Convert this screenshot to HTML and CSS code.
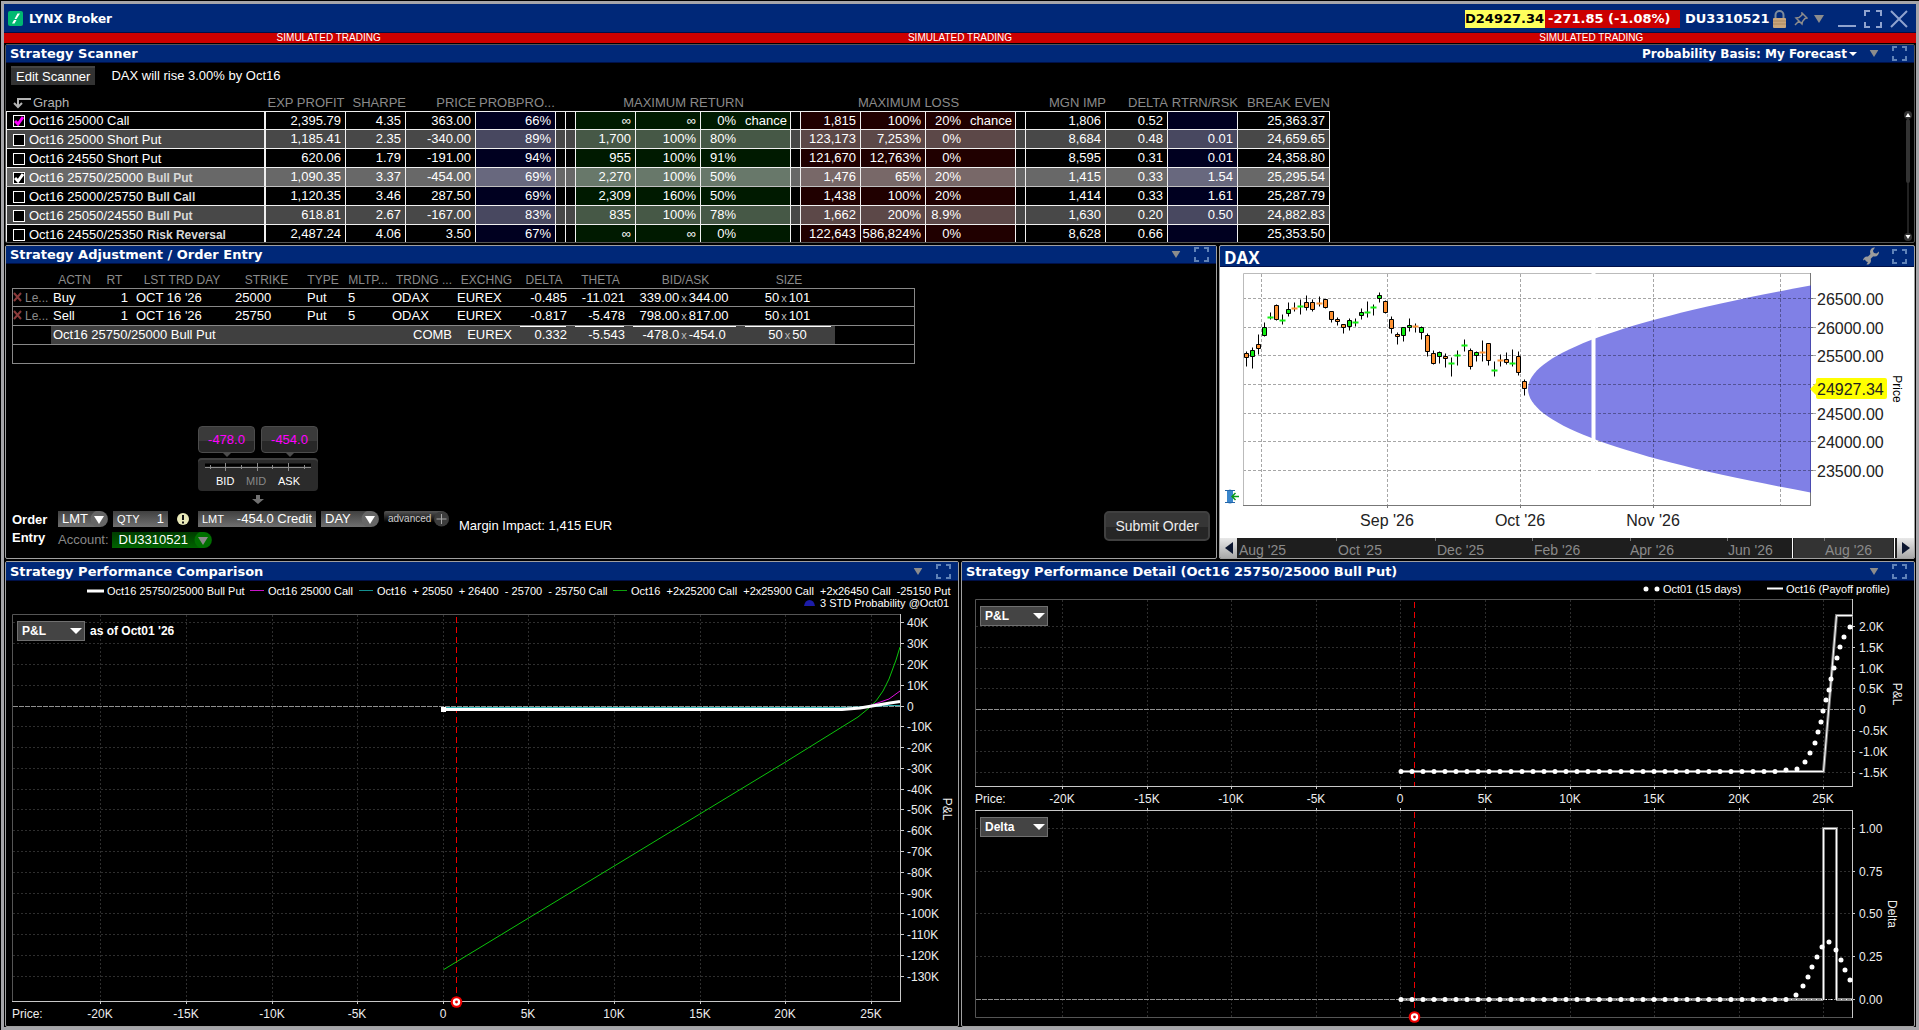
FILE: index.html
```html
<!DOCTYPE html>
<html lang="en">
<head>
<meta charset="utf-8">
<title>LYNX Broker</title>
<link rel="stylesheet" href="styles.css">
</head>
<body>
<svg class="defs" aria-hidden="true">
  <symbol id="expand" viewBox="0 0 15 15"><path d="M1 5V1h4M10 1h4v4M14 10v4h-4M5 14H1v-4" fill="none" stroke="#5f82b8" stroke-width="2"/></symbol>
  <symbol id="tri" viewBox="0 0 10 8"><path d="M0 0h10L5 8z" fill="#8c8c8c"/></symbol>
  <symbol id="target" viewBox="0 0 14 14"><circle cx="7" cy="7" r="6.3" fill="#f00000"/><circle cx="7" cy="7" r="4" fill="#fff"/><circle cx="7" cy="7" r="1.5" fill="#e00000"/></symbol>
</svg>
<div class="window">
  <header class="titlebar">
    <svg class="logo" viewBox="0 0 15 15"><rect width="15" height="15" rx="2" fill="#00b871"/><path d="M4 12.500h2.500L8.500 9H6zM8.500 8L12 2.500H9.500L6.500 8z" fill="#fff"/></svg>
    <h1>LYNX Broker</h1>
    <span class="index-last">D24927.34</span>
    <span class="index-change">-271.85 (-1.08%)</span>
    <span class="account-id">DU3310521</span>
    <svg class="lock" viewBox="0 0 13 18"><path d="M2.500 9V5a4 4 0 0 1 8 0v4" fill="none" stroke="#7d8b9c" stroke-width="2"/><rect y="8" width="13" height="10" rx="1" fill="#c9a67c"/><path d="M0 11h13M0 14h13" stroke="#ab8860"/></svg>
    <svg class="pin" viewBox="0 0 14 14"><path d="M8 1l5 5-2 .5-2.500 3L8 12 2 6l3-.5L8 3zM5 9l-4 4" fill="none" stroke="#8c8c8c" stroke-width="1.500"/></svg>
    <svg class="tri-menu" viewBox="0 0 10 8"><use href="#tri"/></svg>
    <button class="win-button" aria-label="Minimize"><svg width="18" height="18"><path d="M0 16h18" stroke="#8fa3cf" stroke-width="2"/></svg></button>
    <button class="win-button" aria-label="Maximize"><svg width="18" height="18"><path d="M1 6V1h5M12 1h5v5M17 12v5h-5M6 17H1v-5" fill="none" stroke="#8fa3cf" stroke-width="2"/></svg></button>
    <button class="win-button" aria-label="Close"><svg width="18" height="18"><path d="M1 1l16 16M17 1L1 17" stroke="#8fa3cf" stroke-width="2"/></svg></button>
  </header>
  <div class="sim-bar"><span>SIMULATED TRADING</span><span>SIMULATED TRADING</span><span>SIMULATED TRADING</span></div>

  <main class="workspace">
    <section class="panel scanner">
      <div class="panel-title"><h2>Strategy Scanner</h2>
        <button class="basis">Probability Basis: My Forecast<svg width="8" height="5"><path d="M0 0h8L4 4z" fill="#fff"/></svg></button>
        <svg class="tri" viewBox="0 0 10 8"><use href="#tri"/></svg><svg class="expand"><use href="#expand"/></svg></div>
      <div class="scanner-tools"><button class="edit-scanner">Edit Scanner</button><span>DAX will rise 3.00% by Oct16</span></div>
      <div class="scanner-body">
      <table class="scan">
        <colgroup><col class="w260"><col class="w80"><col class="w60"><col class="w70"><col class="w80"><col class="w10"><col class="w10"><col class="w60"><col class="w65"><col class="w90"><col class="w10"><col class="w60"><col class="w65"><col class="w90"><col class="w10"><col class="w80"><col class="w62"><col class="w70"><col class="w92"></colgroup>
        <thead><tr><th class="graph"><svg width="18" height="12"><path d="M18 2H5v8M1 6l4 4 4-4" fill="none" stroke="#b4b4b4" stroke-width="2"/></svg>Graph</th><th class="mid">EXP PROFIT</th><th>SHARPE</th><th>PRICE</th><th class="cut">PROBPRO...</th><th></th><th></th><th colspan="3" class="mid">MAXIMUM RETURN</th><th></th><th colspan="3" class="mid">MAXIMUM LOSS</th><th></th><th>MGN IMP</th><th>DELTA</th><th>RTRN/RSK</th><th>BREAK EVEN</th></tr></thead>
        <tbody>
        <tr><td><label><input type="checkbox" class="pink" checked>Oct16 25000 Call</label></td><td>2,395.79</td><td>4.35</td><td>363.00</td><td class="b">66%</td><td></td><td></td><td class="g">∞</td><td class="g">∞</td><td class="g c"><span>0%</span>chance</td><td></td><td class="r">1,815</td><td class="r">100%</td><td class="r c"><span>20%</span>chance</td><td></td><td>1,806</td><td>0.52</td><td class="b"></td><td>25,363.37</td></tr>
        <tr class="alt"><td><label><input type="checkbox">Oct16 25000 Short Put</label></td><td>1,185.41</td><td>2.35</td><td>-340.00</td><td class="b">89%</td><td></td><td></td><td class="g">1,700</td><td class="g">100%</td><td class="g c"><span>80%</span></td><td></td><td class="r">123,173</td><td class="r">7,253%</td><td class="r c"><span>0%</span></td><td></td><td>8,684</td><td>0.48</td><td class="b">0.01</td><td>24,659.65</td></tr>
        <tr><td><label><input type="checkbox">Oct16 24550 Short Put</label></td><td>620.06</td><td>1.79</td><td>-191.00</td><td class="b">94%</td><td></td><td></td><td class="g">955</td><td class="g">100%</td><td class="g c"><span>91%</span></td><td></td><td class="r">121,670</td><td class="r">12,763%</td><td class="r c"><span>0%</span></td><td></td><td>8,595</td><td>0.31</td><td class="b">0.01</td><td>24,358.80</td></tr>
        <tr class="sel"><td><label><input type="checkbox" checked>Oct16 25750/25000 <b>Bull Put</b></label></td><td>1,090.35</td><td>3.37</td><td>-454.00</td><td class="b">69%</td><td></td><td></td><td class="g">2,270</td><td class="g">100%</td><td class="g c"><span>50%</span></td><td></td><td class="r">1,476</td><td class="r">65%</td><td class="r c"><span>20%</span></td><td></td><td>1,415</td><td>0.33</td><td class="b">1.54</td><td>25,295.54</td></tr>
        <tr><td><label><input type="checkbox">Oct16 25000/25750 <b>Bull Call</b></label></td><td>1,120.35</td><td>3.46</td><td>287.50</td><td class="b">69%</td><td></td><td></td><td class="g">2,309</td><td class="g">160%</td><td class="g c"><span>50%</span></td><td></td><td class="r">1,438</td><td class="r">100%</td><td class="r c"><span>20%</span></td><td></td><td>1,414</td><td>0.33</td><td class="b">1.61</td><td>25,287.79</td></tr>
        <tr class="alt"><td><label><input type="checkbox">Oct16 25050/24550 <b>Bull Put</b></label></td><td>618.81</td><td>2.67</td><td>-167.00</td><td class="b">83%</td><td></td><td></td><td class="g">835</td><td class="g">100%</td><td class="g c"><span>78%</span></td><td></td><td class="r">1,662</td><td class="r">200%</td><td class="r c"><span>8.9%</span></td><td></td><td>1,630</td><td>0.20</td><td class="b">0.50</td><td>24,882.83</td></tr>
        <tr><td><label><input type="checkbox">Oct16 24550/25350 <b>Risk Reversal</b></label></td><td>2,487.24</td><td>4.06</td><td>3.50</td><td class="b">67%</td><td></td><td></td><td class="g">∞</td><td class="g">∞</td><td class="g c"><span>0%</span></td><td></td><td class="r">122,643</td><td class="r">586,824%</td><td class="r c"><span>0%</span></td><td></td><td>8,628</td><td>0.66</td><td class="b"></td><td>25,353.50</td></tr>
        </tbody>
      </table>
      <svg class="scrollbar" viewBox="0 0 8 132"><path d="M4 9v114" stroke="#222" stroke-width="2"/><path d="M4 11v60" stroke="#333" stroke-width="4" stroke-linecap="round"/><circle cx="4" cy="5" r="4" fill="#333"/><circle cx="4" cy="127" r="4" fill="#333"/><path d="M1.500 7h5L4 3zM1.500 125h5L4 129z" fill="#fff"/></svg>
      </div>
    </section>

    <div class="row trade">
      <section class="panel order">
        <div class="panel-title"><h2>Strategy Adjustment / Order Entry</h2><svg class="tri" viewBox="0 0 10 8"><use href="#tri"/></svg><svg class="expand"><use href="#expand"/></svg></div>
        <div class="order-body">
        <table class="legs">
          <colgroup><col class="w39"><col class="w44"><col class="w36"><col class="w99"><col class="w70"><col class="w43"><col class="w47"><col class="w65"><col class="w60"><col class="w55"><col class="w58"><col class="w112"><col class="w95"><col class="w80"></colgroup>
          <thead><tr><th></th><th>ACTN</th><th>RT</th><th>LST TRD DAY</th><th>STRIKE</th><th>TYPE</th><th>MLTP...</th><th>TRDNG ...</th><th>EXCHNG</th><th>DELTA</th><th>THETA</th><th>BID/ASK</th><th>SIZE</th><th></th></tr></thead>
          <tbody>
          <tr><td class="leg"><svg width="9" height="10"><path d="M1 1l7 8M8 1L1 9" stroke="#8a3a3a" stroke-width="2"/></svg>Le...</td><td>Buy</td><td class="n">1</td><td class="i">OCT 16 '26</td><td class="i">25000</td><td class="j">Put</td><td class="i">5</td><td>ODAX</td><td>EUREX</td><td class="n">-0.485</td><td class="n">-11.021</td><td class="m">339.00<i>x</i>344.00</td><td class="m">50<i>x</i>101</td><td></td></tr>
          <tr><td class="leg"><svg width="9" height="10"><path d="M1 1l7 8M8 1L1 9" stroke="#8a3a3a" stroke-width="2"/></svg>Le...</td><td>Sell</td><td class="n">1</td><td class="i">OCT 16 '26</td><td class="i">25750</td><td class="j">Put</td><td class="i">5</td><td>ODAX</td><td>EUREX</td><td class="n">-0.817</td><td class="n">-5.478</td><td class="m">798.00<i>x</i>817.00</td><td class="m">50<i>x</i>101</td><td></td></tr>
          <tr class="combo"><td class="off"></td><td colspan="6">Oct16 25750/25000 Bull Put</td><td class="n">COMB</td><td class="n">EUREX</td><td class="n sum">0.332</td><td class="n sum">-5.543</td><td class="m sum">-478.0<i>x</i>-454.0</td><td class="m sum">50<i>x</i>50</td><td class="off"></td></tr>
          <tr><td colspan="14"></td></tr>
          </tbody>
        </table>
        <div class="quote">
          <div class="quote-prices"><button class="price-tag">-478.0</button><button class="price-tag">-454.0</button></div>
          <div class="price-slider">
            <svg width="108" height="10"><path d="M1 3h106" stroke="#000" stroke-width="3"/><path d="M1 5.500h106M6.500 3v4M21.500 1v8M37.500 3v4M53.500 1v8M68.500 3v4M84.500 1v8M100.500 3v4" stroke="#8c8c8c"/></svg>
            <div class="slider-labels"><span>BID</span><span class="dim">MID</span><span>ASK</span></div>
          </div>
          <svg class="down" width="12" height="10"><path d="M4 0h4v4h4L6 9 0 4h4z" fill="#707070"/></svg>
        </div>
        <div class="ticket">
          <div class="ticket-name">Order<br>Entry</div>
          <div class="ticket-fields">
            <div class="fields">
              <select class="pick type" aria-label="Order type"><option>LMT</option></select>
              <label class="field qty">QTY<input value="1"></label>
              <svg class="alert" width="12" height="14"><ellipse cx="6" cy="7" rx="6" ry="6" fill="#e8e8b8"/><path d="M6 3v5M6 9.500v2" stroke="#111" stroke-width="2"/></svg>
              <label class="field limit">LMT<input value="-454.0 Credit"></label>
              <select class="pick tif" aria-label="Time in force"><option>DAY</option></select>
              <button class="advanced">advanced<svg width="15" height="16"><circle cx="7.500" cy="8" r="7.500" fill="#3c3c3c"/><path d="M7.500 3v10M2.500 8h10" stroke="#a8a8a8"/></svg></button>
            </div>
            <div class="fields account"><label for="acct">Account:</label><select id="acct" class="pick acct"><option>DU3310521</option></select></div>
          </div>
          <div class="margin-impact">Margin Impact: 1,415 EUR</div>
          <button class="submit">Submit Order</button>
        </div>
        </div>
      </section>

      <section class="panel dax">
        <div class="panel-title"><h2>DAX</h2>
          <svg class="wrench" viewBox="0 0 18 18"><path d="M4 14L12 6" stroke="#9c9c9c" stroke-width="3.500"/><path d="M17 4.500a4.500 4.500 0 1 1-4-4L11 3.500l.5 2.500 3 .5zM1 13.500a4 4 0 1 1 3.500 4L6 15l-1-2-2-.5z" fill="#9c9c9c"/></svg>
          <svg class="expand"><use href="#expand"/></svg></div>
        <svg class="chart price-chart" viewBox="1220 267 694 271">
          <path d="M1528 389C1528 354.500 1622.200 320 1810.500 285.600V492.400C1622.200 458 1528 423.500 1528 389z" fill="#8080e6"/>
          <path class="grid-light" d="M1243 298.500h573M1243 327.500h573M1243 355.500h573M1243 384.500h573M1243 413.500h573M1243 441.500h573M1243 470.500h573M1261.500 274v232M1387.500 274v232M1520.500 274v232M1653.500 274v232M1780.500 274v232"/>
          <path d="M1243.500 506V273.500H1811" fill="none" stroke="#bbb"/>
          <path d="M1593.500 272v233" stroke="#fff" stroke-width="4"/>
          <path d="M1243 505.500h568M1810.500 273v233M1387.500 505v3M1520.500 505v3M1653.500 505v3M1810 298.500h3M1810 327.500h3M1810 355.500h3M1810 413.500h3M1810 441.500h3M1810 470.500h3" fill="none" stroke="#777"/>
          <path d="M1810.500 285.500v207" stroke="#4a4ab0"/>
          <g transform="translate(.5 .5)">
            <path stroke="#000" d="M1246 351v15M1252 347v21M1258 334v20M1264 322v14M1270 312v7M1276 304v16M1282 314v10M1288 302v14M1294 302v9M1300 299v15M1306 295v15M1312 299v12M1319 296v10M1325 299v9M1331 311v11M1337 317v8M1343 324v9M1349 318v12M1355 318v8M1361 308v11M1367 301v16M1373 304v11M1379 292v10M1385 300v13M1391 316v17M1397 332v12M1403 327v14M1409 318v13M1415 323v9M1421 326v13M1427 333v23M1433 350v14M1439 351v12M1445 353v14M1451 357v19M1457 350v15M1464 339v12M1470 348v21M1476 351v10M1482 340v21M1488 343v22M1494 361v15M1500 354v12M1506 352v12M1512 349v17M1518 351v24M1524 379v16"/>
            <path fill="#ff9232" stroke="#000" d="M1244 353h4v4h-4zM1256 344h4v4h-4zM1274 305h4v14h-4zM1304 302h4v5h-4zM1310 302h4v7h-4zM1323 299h4v8h-4zM1329 311h4v8h-4zM1335 319h4v2h-4zM1341 324h4v3h-4zM1383 301h4v11h-4zM1389 319h4v9h-4zM1395 334h4v2h-4zM1425 335h4v16h-4zM1431 353h4v10h-4zM1443 356h4v2h-4zM1468 350h4v16h-4zM1486 343h4v17h-4zM1504 359h4v3h-4zM1516 356h4v16h-4zM1522 381h4v7h-4z"/>
            <path fill="#12ee12" stroke="#000" d="M1250 350h4v6h-4zM1262 327h4v8h-4zM1286 309h4v4h-4zM1347 320h4v6h-4zM1359 312h4v3h-4zM1377 295h4v3h-4zM1401 327h4v8h-4zM1407 325h4v2h-4zM1419 327h4v5h-4zM1437 352h4v4h-4zM1474 352h4v3h-4z"/>
            <path stroke="#ff9232" stroke-width="2" d="M1291 308h6M1316 303h6M1412 326h6M1479 352h6M1497 360h6"/>
            <path stroke="#12ee12" stroke-width="2" d="M1267 317h6M1279 320h6M1297 306h6M1352 322h6M1364 312h6M1370 307h6M1448 363h6M1454 355h6M1461 345h6M1491 370h6M1509 363h6"/>
          </g>
          <path d="M1810 389l6-6v-3q0-2 2-2h67q2 0 2 2v17q0 2-2 2h-67q-2 0-2-2v-2z" fill="#ff0"/>
          <g class="price-text"><text x="1817" y="305">26500.00</text><text x="1817" y="334">26000.00</text><text x="1817" y="362">25500.00</text><text x="1817" y="395">24927.34</text><text x="1817" y="420">24500.00</text><text x="1817" y="448">24000.00</text><text x="1817" y="477">23500.00</text></g>
          <g class="price-text mid-text"><text x="1387" y="526">Sep '26</text><text x="1520" y="526">Oct '26</text><text x="1653" y="526">Nov '26</text></g>
          <text class="side dark" transform="translate(1893 389) rotate(90)">Price</text>
          <path d="M1227 491q3-3 6 0v11q-3 3-6 0z" fill="#3a86cc"/><path d="M1225 490.500h10M1225 502.500h10" stroke="#2566a8"/><path d="M1232 496.500h7M1235.500 493l-3.500 3.500 3.500 3.500" fill="none" stroke="#0a9a1a" stroke-width="1.500"/>
        </svg>
        <div class="timeline">
          <button aria-label="Earlier"><svg width="8" height="12"><path d="M8 0v12L0 6z" fill="#0c1630"/></svg></button>
          <svg class="track" viewBox="1237 538 660 20"><rect x="1237" y="538" width="660" height="20" fill="#1e1e1e"/><rect x="1794" y="538" width="99" height="20" fill="#333"/><path d="M1792.500 538v20M1894.500 538v20" stroke="#fff"/><path d="M1336.500 538v3M1435.500 538v3M1532.500 538v3M1630.500 538v3M1727.500 538v3M1824.500 538v3" stroke="#777"/>
            <g><text x="1239" y="555">Aug '25</text><text x="1338" y="555">Oct '25</text><text x="1437" y="555">Dec '25</text><text x="1534" y="555">Feb '26</text><text x="1630" y="555">Apr '26</text><text x="1728" y="555">Jun '26</text><text x="1825" y="555">Aug '26</text></g></svg>
          <button aria-label="Later"><svg width="8" height="12"><path d="M0 0v12l8-6z" fill="#0c1630"/></svg></button>
        </div>
      </section>
    </div>

    <div class="row perf">
      <section class="panel chart-panel">
        <div class="panel-title"><h2>Strategy Performance Comparison</h2><svg class="tri" viewBox="0 0 10 8"><use href="#tri"/></svg><svg class="expand"><use href="#expand"/></svg></div>
        <div class="chart-body">
        <svg class="chart" viewBox="6 581 952 445">
          <path class="grid" d="M13 622.500h888M13 643.500h888M13 664.500h888M13 685.500h888M13 726.500h888M13 747.500h888M13 768.500h888M13 789.500h888M13 809.500h888M13 830.500h888M13 851.500h888M13 872.500h888M13 893.500h888M13 913.500h888M13 934.500h888M13 955.500h888M13 976.500h888M100.500 615v386M186.500 615v386M272.500 615v386M357.500 615v386M443.500 615v386M528.500 615v386M614.500 615v386M700.500 615v386M785.500 615v386M871.500 615v386"/>
          <path d="M12.500 1001V614.500H901" fill="none" stroke="#555"/>
          <path class="axis" d="M12 1001.500h889M900.500 614v387M100.500 1001v3M186.500 1001v3M272.500 1001v3M357.500 1001v3M443.500 1001v3M528.500 1001v3M614.500 1001v3M700.500 1001v3M785.500 1001v3M871.500 1001v3M901 622.500h3M901 643.500h3M901 664.500h3M901 685.500h3M901 706.500h3M901 726.500h3M901 747.500h3M901 768.500h3M901 789.500h3M901 809.500h3M901 830.500h3M901 851.500h3M901 872.500h3M901 893.500h3M901 913.500h3M901 934.500h3M901 955.500h3M901 976.500h3"/>
          <path class="zero" d="M13 706.500h888"/>
          <path class="cursor" d="M456.500 617v376"/>
          <path d="M443.500 969.700L785.500 762 858 717l11-9q8-7 14-17l6-12 7-19 4-13" fill="none" stroke="#0cc40c"/>
          <path d="M869 706l20-7 11-8" fill="none" stroke="#e010e0"/>
          <path d="M443 707.500h400l30-1 16-1h11" fill="none" stroke="#2ab0b0"/>
          <path d="M443 709.500H842l18-1.500 12-2 18-3 10-1.500" fill="none" stroke="#fff" stroke-width="3"/><rect x="441" y="707" width="5" height="5" fill="#fff"/>
          <use href="#target" x="450" y="995" width="13" height="14"/>
          <g class="legend"><path d="M87 591h17" stroke="#fff" stroke-width="3"/><path d="M250 590.500h14" stroke="#c814c8"/><path d="M359 590.500h14" stroke="#149090"/><path d="M613 590.500h14" stroke="#0ca00c"/>
            <text x="107" y="595">Oct16 25750/25000 Bull Put</text><text x="268" y="595">Oct16 25000 Call</text><text x="377" y="595">Oct16  + 25050  + 26400  - 25700  - 25750 Call</text><text x="631" y="595">Oct16  +2x25200 Call  +2x25900 Call  +2x26450 Call  -25150 Put</text><text x="820" y="607">3 STD Probability @Oct01</text><path d="M804 606q1-6 5.500-6t5.500 6z" fill="#1c1ca8"/></g>
          <g class="labels"><text x="907" y="627">40K</text><text x="907" y="648">30K</text><text x="907" y="669">20K</text><text x="907" y="690">10K</text><text x="907" y="711">0</text><text x="907" y="731">-10K</text><text x="907" y="752">-20K</text><text x="907" y="773">-30K</text><text x="907" y="794">-40K</text><text x="907" y="814">-50K</text><text x="907" y="835">-60K</text><text x="907" y="856">-70K</text><text x="907" y="877">-80K</text><text x="907" y="898">-90K</text><text x="907" y="918">-100K</text><text x="907" y="939">-110K</text><text x="907" y="960">-120K</text><text x="907" y="981">-130K</text><text x="12" y="1018">Price:</text></g>
          <g class="labels mid-text"><text x="100" y="1018">-20K</text><text x="186" y="1018">-15K</text><text x="272" y="1018">-10K</text><text x="357" y="1018">-5K</text><text x="443" y="1018">0</text><text x="528" y="1018">5K</text><text x="614" y="1018">10K</text><text x="700" y="1018">15K</text><text x="785" y="1018">20K</text><text x="871" y="1018">25K</text></g>
          <text class="side" transform="translate(943 809) rotate(90)">P&amp;L</text>
        </svg>
        <div class="overlay compare"><select aria-label="Measure"><option>P&amp;L</option></select><span>as of Oct01 '26</span></div>
        </div>
      </section>

      <section class="panel chart-panel">
        <div class="panel-title"><h2>Strategy Performance Detail (Oct16 25750/25000 Bull Put)</h2><svg class="tri" viewBox="0 0 10 8"><use href="#tri"/></svg><svg class="expand"><use href="#expand"/></svg></div>
        <div class="chart-body">
        <svg class="chart" viewBox="962 581 952 445">
          <path class="grid" d="M976 626.500h877M976 647.500h877M976 668.500h877M976 688.500h877M976 730.500h877M976 751.500h877M976 772.500h877M976 828.500h877M976 871.500h877M976 913.500h877M976 956.500h877M1062.500 600v186M1147.500 600v186M1231.500 600v186M1316.500 600v186M1400.500 600v186M1485.500 600v186M1570.500 600v186M1654.500 600v186M1739.500 600v186M1823.500 600v186M1062.500 811v206M1147.500 811v206M1231.500 811v206M1316.500 811v206M1400.500 811v206M1485.500 811v206M1570.500 811v206M1654.500 811v206M1739.500 811v206M1823.500 811v206"/>
          <path d="M975.500 786V599.500H1853M975.500 811v206.500H1853" fill="none" stroke="#555"/>
          <path class="axis" d="M975 786.500h878M1852.500 599v187M975 810.500h878M1852.500 810v208M1062.500 786v3M1147.500 786v3M1231.500 786v3M1316.500 786v3M1400.500 786v3M1485.500 786v3M1570.500 786v3M1654.500 786v3M1739.500 786v3M1823.500 786v3M1062.500 808v3M1147.500 808v3M1231.500 808v3M1316.500 808v3M1400.500 808v3M1485.500 808v3M1570.500 808v3M1654.500 808v3M1739.500 808v3M1823.500 808v3M1853 626.500h2M1853 647.500h2M1853 668.500h2M1853 688.500h2M1853 709.500h2M1853 730.500h2M1853 751.500h2M1853 772.500h2M1853 828.500h2M1853 871.500h2M1853 913.500h2M1853 956.500h2M1853 999.500h2"/>
          <path class="zero" d="M976 709.500h877M976 999.500h877"/>
          <path class="cursor" d="M1414.500 602v184M1414.500 812v198"/>
          <path d="M1401 999.500h422M1836 999.500h16" stroke="#888" stroke-width="3"/><path d="M1401 999.500h452" stroke="#fff" stroke-dasharray="1 4"/>
          <path d="M1400 771.500h423.500l13-156h16M1823.500 1000V828.500h13V1000" fill="none" stroke="#808080" stroke-width="3"/>
          <path d="M1400 771.500h423.500l13-156h16M1823.500 1000V828.500h13V1000" fill="none" stroke="#fff"/>
          <g class="dots"><path stroke-dasharray="0 11" d="M1401 771.500h376M1401 999.500h387"/>
            <path d="M1786 770h0M1797 769h0M1805 762h0M1810 753h0M1815 743h0M1818 732h0M1821 722h0M1823 711h0M1826 700h0M1829 690h0M1831 679h0M1834 668h0M1837 658h0M1840 647h0M1844 637h0M1850 627h0M1796 995h0M1803 986h0M1808 977h0M1812 967h0M1817 957h0M1822 947h0M1829 942h0M1836 950h0M1841 960h0M1845 970h0M1850 980h0M1646 589h0M1657 589h0"/></g>
          <use href="#target" x="1408" y="1010" width="13" height="14"/>
          <g class="legend"><path d="M1767 588.500h16" stroke="#fff" stroke-width="2"/><text x="1663" y="593">Oct01 (15 days)</text><text x="1786" y="593">Oct16 (Payoff profile)</text></g>
          <g class="labels"><text x="1859" y="631">2.0K</text><text x="1859" y="652">1.5K</text><text x="1859" y="673">1.0K</text><text x="1859" y="693">0.5K</text><text x="1859" y="714">0</text><text x="1859" y="735">-0.5K</text><text x="1859" y="756">-1.0K</text><text x="1859" y="777">-1.5K</text><text x="1859" y="833">1.00</text><text x="1859" y="876">0.75</text><text x="1859" y="918">0.50</text><text x="1859" y="961">0.25</text><text x="1859" y="1004">0.00</text><text x="975" y="803">Price:</text></g>
          <g class="labels mid-text"><text x="1062" y="803">-20K</text><text x="1147" y="803">-15K</text><text x="1231" y="803">-10K</text><text x="1316" y="803">-5K</text><text x="1400" y="803">0</text><text x="1485" y="803">5K</text><text x="1570" y="803">10K</text><text x="1654" y="803">15K</text><text x="1739" y="803">20K</text><text x="1823" y="803">25K</text></g>
          <text class="side" transform="translate(1893 694) rotate(90)">P&amp;L</text><text class="side" transform="translate(1888 914) rotate(90)">Delta</text>
        </svg>
        <div class="overlay detail-top"><select aria-label="Upper measure"><option>P&amp;L</option></select></div>
        <div class="overlay detail-low"><select aria-label="Lower measure"><option>Delta</option></select></div>
        </div>
      </section>
    </div>
  </main>
</div>
</body>
</html>
```
FILE: styles.css
```css
* { box-sizing: border-box; }
body { margin: 0; background: #000; color: #fff; font: 13px/18px "Liberation Sans", Arial, sans-serif; }
button, input, select { font: inherit; color: inherit; border: 0; padding: 0; margin: 0; background: none; border-radius: 0; appearance: none; }
h1, h2 { margin: 0; font: bold 13px/18px "DejaVu Sans", Verdana, sans-serif; white-space: nowrap; }
svg { display: block; flex: none; }
.defs { position: absolute; width: 0; height: 0; }

.window { display: flex; flex-direction: column; height: calc(100vh - 1px); min-height: 900px; margin: 1px 0 0 1px; border: 3px solid #a6a6aa; background: #000; }
.titlebar { display: flex; align-items: center; height: 29px; padding: 1px 8px 0 4px; background: #002878; border-bottom: 1px solid #001048; font: bold 13px/18px "DejaVu Sans", Verdana, sans-serif; white-space: nowrap; }
.logo { width: 15px; height: 15px; margin-right: 6px; }
.titlebar h1 { flex: 1; font-size: 12px; }
.index-last { width: 80px; background: #ffff5c; color: #000; }
.index-change { width: 135px; padding-left: 3px; background: #cc0000; }
.account-id { width: 93px; padding-left: 5px; }
.lock { width: 13px; height: 18px; margin-right: 8px; }
.pin { width: 14px; height: 14px; margin-right: 6px; }
.tri-menu { width: 10px; height: 8px; margin-right: 14px; }
.win-button { width: 18px; height: 18px; margin-left: 8px; }
.tri-menu + .win-button { margin-left: 0; }
.sim-bar { display: grid; grid-template-columns: repeat(3, 1fr); padding: 0 9px; height: 10px; margin-bottom: 1px; background: #cc0000; font-size: 10px; line-height: 10px; text-align: center; }

.workspace { flex: 1; min-height: 0; display: grid; grid-template-rows: minmax(0, 199fr) minmax(0, 314fr) minmax(0, 466fr); gap: 2px; margin: 0 1px; }
.row { display: grid; gap: 2px; min-height: 0; }
.trade { grid-template-columns: minmax(0, 1212fr) minmax(0, 696fr); }
.perf { grid-template-columns: minmax(0, 1fr) minmax(0, 1fr); }
.panel { display: flex; flex-direction: column; min-width: 0; min-height: 0; overflow: hidden; border: 1px solid #a0a0a0; border-radius: 2px; background: #000; }
.scanner { border-color: #555; }
.panel-title { flex: none; display: flex; align-items: center; height: 18px; padding: 0 7px 0 4px; background: #002878; border-bottom: 1px solid #001048; }
.panel-title h2 { flex: 1; padding-top: 1px; }
.tri { width: 10px; height: 7px; margin-right: 13px; }
.expand { width: 15px; height: 15px; }
.basis { display: flex; align-items: center; gap: 2px; margin-right: 12px; padding-top: 1px; font: bold 12px/17px "DejaVu Sans", Verdana, sans-serif; }
.chart-panel .panel-title { height: 19px; }
.dax .panel-title { height: 21px; }
.panel.dax h2 { padding-top: 2px; font: bold 17px/19px "Open Sans", sans-serif; }
.wrench { width: 18px; height: 18px; margin-right: 12px; }

.scanner-tools { display: flex; align-items: center; gap: 16px; padding: 3px 5px 0; }
.edit-scanner { height: 19px; padding: 0 5px; background: #333; border-top: 2px solid #444; line-height: 17px; }
.scanner-body { display: flex; justify-content: space-between; padding-right: 1px; }
table { table-layout: fixed; border-collapse: separate; border-spacing: 0; }
td, th { padding: 0; white-space: nowrap; overflow: hidden; }
th { font-weight: normal; color: #8a8a8a; }
.scan { width: 1324px; }
.scan th { height: 26px; padding-top: 8px; line-height: 18px; text-align: right; }
.scan thead th { padding-top: 9px; line-height: 17px; }
.scan th.mid { text-align: center; }
.scan th.cut { text-align: left; padding-left: 3px; }
.scan th.graph { display: flex; align-items: center; padding-left: 7px; gap: 2px; color: #b4b4b4; }
.scan td { height: 19px; padding-right: 4px; line-height: 16px; text-align: right; border-right: 1px solid #f0f0f0; border-bottom: 1px solid #f0f0f0; }
.scan tr:first-child td { border-top: 1px solid #f0f0f0; }
.scan td:first-child { text-align: left; border-left: 1px solid #f0f0f0; border-right-width: 2px; }
.scan td:nth-child(6), .scan td:nth-child(7), .scan td:nth-child(11), .scan td:nth-child(15) { padding: 0; }
.scan label { display: flex; align-items: center; gap: 4px; padding: 1px 0 0 6px; line-height: 16px; }
.scan label b { font-size: 12px; color: #d8d8d8; }
.scan input { width: 12px; height: 12px; border: 1px solid #fff; background: #000; }
.scan input:checked { background: #000 url("data:image/svg+xml,%3Csvg xmlns='http://www.w3.org/2000/svg' width='10' height='10'%3E%3Cpath d='M1 5l3 3 5-7' fill='none' stroke='white' stroke-width='3'/%3E%3C/svg%3E"); }
.scan input.pink:checked { background-image: url("data:image/svg+xml,%3Csvg xmlns='http://www.w3.org/2000/svg' width='10' height='10'%3E%3Cpath d='M1 5l3 3 5-7' fill='none' stroke='%23f0f' stroke-width='3'/%3E%3C/svg%3E"); }
.scan td.c { text-align: left; }
.scan .c span { display: inline-block; width: 35px; margin-right: 9px; text-align: right; }
.scan .b { background: #000020; }
.scan .g { background: #001a00; }
.scan .r { background: #200000; }
.alt td { background: #484848; }
.alt .b { background: #484860; }
.alt .g { background: #465846; }
.alt .r { background: #5c4848; }
.sel td { background: #686868; border-bottom-color: #c0c0c0; }
.sel .b { background: #68687e; }
.sel .g { background: #68786a; }
.sel .r { background: #786868; }
.scrollbar { width: 8px; height: 132px; margin: 25px 1px 0 0; }

.w10 { width: 10px; } .w36 { width: 36px; } .w39 { width: 39px; } .w43 { width: 43px; } .w44 { width: 44px; }
.w47 { width: 47px; } .w55 { width: 55px; } .w58 { width: 58px; } .w60 { width: 60px; } .w62 { width: 62px; }
.w65 { width: 65px; } .w70 { width: 70px; } .w80 { width: 80px; } .w90 { width: 90px; } .w92 { width: 92px; }
.w95 { width: 95px; } .w99 { width: 99px; } .w112 { width: 112px; } .w260 { width: 260px; }

.order-body { flex: 1; min-height: 0; display: flex; flex-direction: column; padding: 6px 6px 10px; }
.legs { width: 903px; }
.legs th { height: 18px; padding: 2px 0 0 3px; line-height: 16px; font-size: 12px; overflow: visible; }
.legs td { height: 19px; padding-left: 2px; line-height: 16px; border-bottom: 1px solid #888; }
.legs tbody tr:first-child td { border-top: 1px solid #888; }
.legs td:first-child { border-left: 1px solid #888; padding-left: 0; }
.legs td:last-child { border-right: 1px solid #888; }
.legs .leg { font-size: 12px; color: #8a8a8a; }
.leg svg { display: inline-block; margin-right: 3px; }
.legs .n { text-align: right; padding-right: 3px; }
.legs .i { padding-left: 5px; }
.legs .j { padding-left: 7px; }
.legs .m { text-align: center; padding: 0; }
.legs i { margin: 0 2px; font-style: normal; font-size: 11px; color: #bbb; }
.combo td { background: #404040; }
.combo td.off { background: #000; }
.combo .sum { background: linear-gradient(#fff, #fff) center top / calc(100% - 9px) 1px no-repeat #404040; }

.quote { width: 120px; margin: auto 0 6px 186px; }
.quote-prices { display: flex; justify-content: space-between; margin-bottom: 5px; }
.price-tag { position: relative; width: 57px; height: 27px; border: 1px solid #4c4c4c; border-radius: 4px; background: linear-gradient(#3a3a3a 55%, #282828 55%); color: #f0f; }
.price-tag::after { content: ""; position: absolute; left: 24px; top: 26px; border: 4px solid transparent; border-top-color: #4c4c4c; }
.price-slider { height: 33px; padding: 4px 6px; border-radius: 4px; background: #2b2b2b; box-shadow: inset 0 2px #404040; }
.slider-labels { display: flex; justify-content: space-between; padding: 2px 12px 0; font-size: 11px; line-height: 14px; }
.dim { color: #888; }
.down { margin: 4px auto 0; }
.ticket { display: flex; align-items: flex-start; }
.ticket-name { width: 46px; font-weight: bold; }
.fields { display: flex; align-items: center; gap: 5px; height: 16px; }
.pick { height: 16px; padding-left: 4px; line-height: 16px; background: url("data:image/svg+xml,%3Csvg xmlns='http://www.w3.org/2000/svg' width='18' height='16'%3E%3Ccircle cx='9' cy='8' r='8.500' fill='%23666'/%3E%3Cpath d='M4 5h10l-5 8z' fill='white'/%3E%3C/svg%3E") right no-repeat, linear-gradient(#404040, #707070); border-radius: 0 8px 8px 0; }
.type { width: 50px; }
.tif { width: 58px; }
.field { display: flex; align-items: center; height: 16px; padding: 0 4px; background: linear-gradient(#404040, #707070); font-size: 11px; }
.field input { flex: 1; min-width: 0; text-align: right; font-size: 13px; height: 16px; }
.qty { width: 55px; }
.limit { width: 118px; }
.alert { margin: 0 4px; }
.advanced { display: flex; align-items: center; justify-content: space-between; width: 65px; height: 16px; padding-left: 4px; font-size: 10px; color: #ccc; background: linear-gradient(#555, #000 70%); border-radius: 2px 8px 8px 2px; white-space: nowrap; }
.account { margin-top: 5px; color: #888; gap: 3px; }
.acct { width: 100px; padding-left: 7px; color: #fff; background: url("data:image/svg+xml,%3Csvg xmlns='http://www.w3.org/2000/svg' width='18' height='16'%3E%3Ccircle cx='9' cy='8' r='8.500' fill='%23007000'/%3E%3Cpath d='M4 5h10l-5 8z' fill='%238a8a8a'/%3E%3C/svg%3E") right no-repeat, linear-gradient(#003c00, #006400); }
.margin-impact { padding: 6px 0 0 10px; }
.submit { width: 106px; height: 30px; margin-left: auto; border: 2px solid #404040; border-radius: 5px; background: linear-gradient(#363636 55%, #262626 55%); font-size: 14px; color: #eee; }

.dax { background: #fff; }
.chart { flex: 1; min-height: 0; width: 100%; height: 100%; }
.price-chart { background: #fff; }
.timeline { flex: none; display: flex; height: 20px; background: #1e1e1e; }
.timeline button { display: grid; place-items: center; width: 17px; background: linear-gradient(#e8e8e8, #a8a8a8); }
.track { flex: 1; min-width: 0; height: 20px; }
.track text { font-size: 14px; fill: #8a8a8a; }
.price-text { font-size: 16px; fill: #222; }
.mid-text { text-anchor: middle; }
.grid-light { stroke: #000; stroke-opacity: .35; stroke-dasharray: 3 2; fill: none; }
.chart-body { position: relative; flex: 1; min-height: 0; }
.grid { stroke: #2e2e2e; stroke-dasharray: 2 2; fill: none; }
.axis { stroke: #c8c8c8; fill: none; }
.zero { stroke: #909090; stroke-dasharray: 5 1; fill: none; }
.cursor { stroke: #f00000; stroke-dasharray: 6 4; fill: none; }
.dots { stroke: #fff; stroke-width: 5; stroke-linecap: round; fill: none; }
.legend { font-size: 11px; fill: #fff; }
.legend text { white-space: pre; }
.labels { font-size: 12px; fill: #eee; }
.side { font-size: 12px; fill: #eee; text-anchor: middle; }
.side.dark { fill: #000; }
.overlay { position: absolute; display: flex; align-items: center; gap: 5px; font-weight: bold; font-size: 12px; }
.overlay select { width: 68px; height: 20px; padding-left: 4px; border: 1px solid #707070; background: url("data:image/svg+xml,%3Csvg xmlns='http://www.w3.org/2000/svg' width='14' height='6'%3E%3Cpath d='M0 0h12L6 6z' fill='white'/%3E%3C/svg%3E") right no-repeat #444; }
.compare { left: 11px; top: 40px; }
.detail-top { left: 18px; top: 25px; }
.detail-low { left: 18px; top: 236px; }
```
